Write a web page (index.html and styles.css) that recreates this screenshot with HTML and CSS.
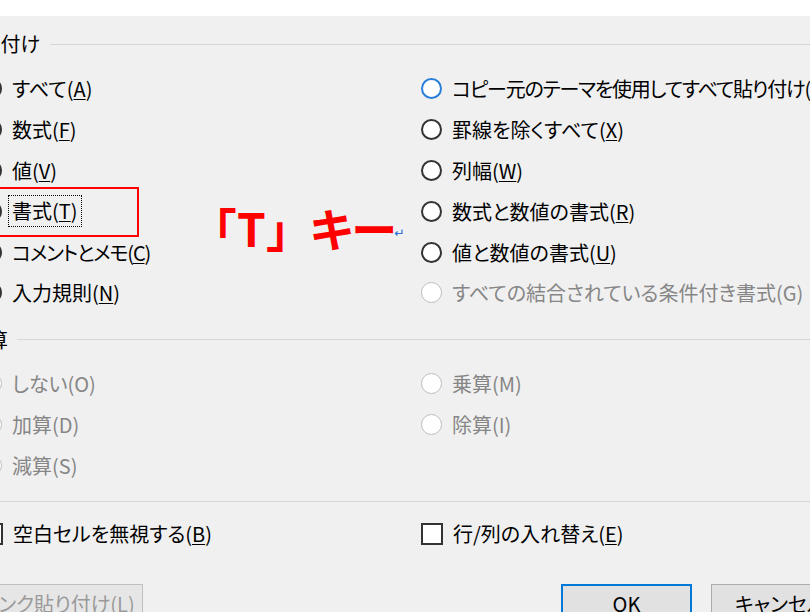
FILE: index.html
```html
<!DOCTYPE html>
<html lang="ja">
<head>
<meta charset="utf-8">
<title>形式を選択して貼り付け</title>
<link rel="stylesheet" href="styles.css">
</head>
<body>
<div class="top"></div>
<div class="dialog">
  <div class="legend-row first"><span class="legend l1">貼り付け</span><span class="rule r1"></span></div>
  <div class="cols cols1">
    <div class="col left">
      <div class="opt"><span class="radio"></span><span>すべて(<u>A</u>)</span></div>
      <div class="opt"><span class="radio"></span><span>数式(<u>F</u>)</span></div>
      <div class="opt"><span class="radio"></span><span>値(<u>V</u>)</span></div>
      <div class="opt"><span class="radio"></span><span class="focus">書式(<u>T</u>)</span></div>
      <div class="opt"><span class="radio"></span><span class="tight">コメントとメモ(<u>C</u>)</span></div>
      <div class="opt"><span class="radio"></span><span>入力規則(<u>N</u>)</span></div>
    </div>
    <div class="col right">
      <div class="opt"><span class="radio hot"></span><span class="tight">コピー元のテーマを使用してすべて貼り付け(<u>H</u>)</span></div>
      <div class="opt"><span class="radio"></span><span>罫線を除くすべて(<u>X</u>)</span></div>
      <div class="opt"><span class="radio"></span><span>列幅(<u>W</u>)</span></div>
      <div class="opt"><span class="radio"></span><span>数式と数値の書式(<u>R</u>)</span></div>
      <div class="opt"><span class="radio"></span><span>値と数値の書式(<u>U</u>)</span></div>
      <div class="opt dis"><span class="radio"></span><span>すべての結合されている条件付き書式(G)</span></div>
    </div>
  </div>
  <div class="legend-row second"><span class="legend l2">演算</span><span class="rule r2"></span></div>
  <div class="cols cols2">
    <div class="col left">
      <div class="opt dis"><span class="radio"></span><span>しない(O)</span></div>
      <div class="opt dis"><span class="radio"></span><span>加算(D)</span></div>
      <div class="opt dis"><span class="radio"></span><span>減算(S)</span></div>
    </div>
    <div class="col right">
      <div class="opt dis"><span class="radio"></span><span>乗算(M)</span></div>
      <div class="opt dis"><span class="radio"></span><span>除算(I)</span></div>
    </div>
  </div>
  <div class="sep"></div>
  <div class="cols cols3">
    <div class="col left">
      <div class="opt"><span class="check"></span><span>空白セルを無視する(<u>B</u>)</span></div>
    </div>
    <div class="col right">
      <div class="opt"><span class="check"></span><span>行/列の入れ替え(<u>E</u>)</span></div>
    </div>
  </div>
  <div class="footer">
    <button class="btn link" disabled>リンク貼り付け(L)</button>
    <span class="spacer"></span>
    <button class="btn ok">OK</button>
    <button class="btn cancel">キャンセル</button>
  </div>
</div>

<div class="mark-box"></div>
<div class="callout"><span class="br">「</span><span class="t">T</span><span class="br">」</span><span class="key">キー</span></div>
<svg class="ret" width="9" height="8" viewBox="0 0 9 8"><path d="M8 0.5 V4.5 H1.5 M3.5 2.5 L1.5 4.5 L3.5 6.5" fill="none" stroke="#2f6fd6" stroke-width="1.2"/></svg>
</body>
</html>
```

FILE: styles.css
```css
html, body {
  margin: 0;
  padding: 0;
}
body {
  width: 810px;
  height: 612px;
  overflow: hidden;
  position: relative;
  background: #f0f0f0;
  font-family: "Noto Sans CJK JP", "Noto Sans", sans-serif;
  font-feature-settings: "palt";
  font-size: 20px;
  color: #000;
}
.top {
  height: 16px;
  background: #fff;
}
.dialog {
  margin-left: -19px;
  width: 829px;
}
.legend-row {
  display: flex;
  align-items: center;
  height: 24px;
  white-space: nowrap;
}
.legend-row.first { margin-top: 16px; }
.legend-row.second { margin-top: 14.6px; }
.legend {
  margin-left: -21px;
  text-align: right;
  line-height: 24px;
}
.l1 { width: 80px; }
.l2 { width: 48px; }
.rule {
  flex: 1;
  height: 1px;
  background: #d7d7d7;
}
.r1 { margin-left: 10px; }
.r2 { margin-left: 9px; }
.cols {
  display: flex;
}
.cols1 { margin-top: 12.6px; }
.cols2 { margin-top: 11.6px; }
.cols3 { margin-top: 11.1px; }
.col.left { width: 440px; flex-shrink: 0; }
.col.right { flex: 1; min-width: 0; }
.opt {
  display: flex;
  align-items: center;
  gap: 10px;
  height: 40.8px;
  white-space: nowrap;
}
.tight { letter-spacing: -1.2px; }
.opt u {
  text-decoration-thickness: 1px;
  text-underline-offset: 2px;
}
.radio {
  width: 21px;
  height: 21px;
  box-sizing: border-box;
  border: 2px solid #333;
  border-radius: 50%;
  background: #fff;
  flex-shrink: 0;
}
.radio.hot { border-color: #2a7fd8; }
.dis { color: #868686; }
.dis .radio { border: 1.5px solid #bdbdbd; }
.check {
  width: 22px;
  height: 22px;
  box-sizing: border-box;
  border: 2px solid #333;
  background: #fff;
  flex-shrink: 0;
}
.focus {
  display: inline-block;
  line-height: 30px;
  border: 1px dotted #000;
  padding: 0 3px;
  margin-left: -4px;
}
.sep {
  margin-top: 15.5px;
  height: 1px;
  background: #d7d7d7;
}
.footer {
  display: flex;
  margin-top: 29.6px;
  width: 880px;
}
.btn {
  flex-shrink: 0;
  height: 40px;
  box-sizing: border-box;
  font: inherit;
  font-feature-settings: "palt";
  white-space: nowrap;
  overflow: hidden;
  background: #e1e1e1;
  border: 1px solid #adadad;
  padding: 0;
  color: #000;
}
.btn.link {
  width: 162px;
  text-align: right;
  padding-right: 15px;
  color: #9a9a9a;
  border-color: #bfbfbf;
  background: #e6e6e6;
}
.spacer { flex: 1; }
.btn.ok {
  width: 131px;
  border: 2px solid #0078d7;
}
.btn.cancel {
  width: 131px;
  margin-left: 19px;
  margin-right: 19px;
  text-align: left;
  padding-left: 23px;
}
.mark-box {
  position: absolute;
  left: -10px;
  top: 187px;
  width: 149px;
  height: 50px;
  box-sizing: border-box;
  border: 2px solid #f00;
}
.callout {
  position: absolute;
  left: 213px;
  top: 195px;
  color: #f00;
  font-weight: 700;
  font-size: 46px;
  line-height: 64px;
  white-space: nowrap;
  display: flex;
}
.callout .t { margin: 0 1px; }
.callout .key { margin-left: 20px; }
.ret {
  position: absolute;
  left: 394px;
  top: 229px;
}
```
